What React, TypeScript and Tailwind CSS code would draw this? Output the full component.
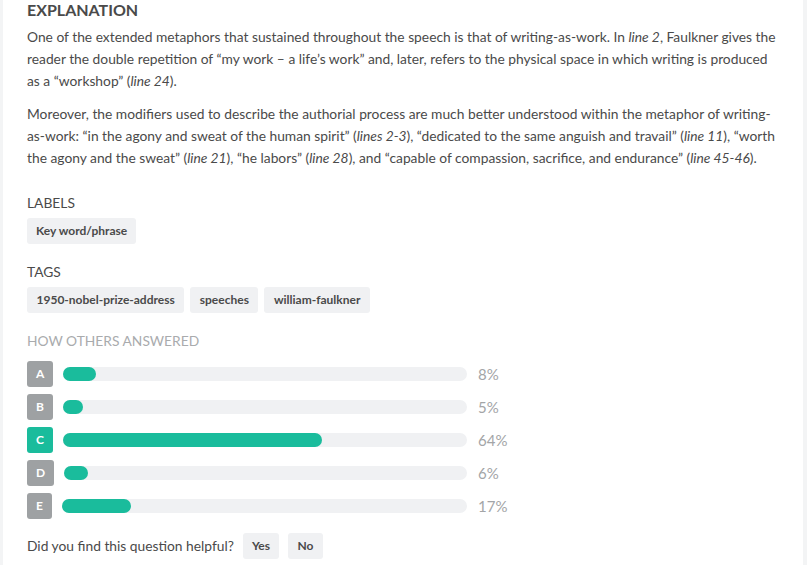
import React from "react";

const rows = [
  { l: "A", p: 8, c: false },
  { l: "B", p: 5, c: false },
  { l: "C", p: 64, c: true },
  { l: "D", p: 6, c: false },
  { l: "E", p: 17, c: false },
];

export default function App() {
  return (
    <div className="w-[807px] h-[565px] bg-[#f3f4f5] overflow-hidden" style={{ fontFamily: "Lato, 'Noto Sans', sans-serif" }}>
      <div className="ml-[3px] w-[800px] h-[565px] bg-white pl-[24px] pr-[23px] text-[#4a4a4a]">
        <h2 className="text-[16px] font-bold leading-[20px] text-[#4a4a4a]">EXPLANATION</h2>
        <div className="text-[13.8px] leading-[22px] mt-[6px]">
          <p>
            One of the extended metaphors that sustained throughout the speech is that of writing-as-work. In <i>line 2</i>, Faulkner gives the reader the double repetition of “my work – a life’s work” and, later, refers to the physical space in which writing is produced as a “workshop” (<i>line 24</i>).
          </p>
          <p className="mt-[11px]">
            Moreover, the modifiers used to describe the authorial process are much better understood within the metaphor of writing-as-work: “in the agony and sweat of the human spirit” (<i>lines 2-3</i>), “dedicated to the same anguish and travail” (<i>line 11</i>), “worth the agony and the sweat” (<i>line 21</i>), “he labors” (<i>line 28</i>), and “capable of compassion, sacrifice, and endurance” (<i>line 45-46</i>).
          </p>
        </div>

        <div className="mt-[25px] text-[13.8px] leading-[18px]">LABELS</div>
        <div className="mt-[6px] flex gap-[6px]">
          <span className="bg-[#f0f1f3] rounded-[3px] px-[9px] h-[26px] flex items-center text-[12px] font-bold">Key word/phrase</span>
        </div>

        <div className="mt-[19px] text-[13.8px] leading-[18px]">TAGS</div>
        <div className="mt-[6px] flex gap-[6px]">
          {["1950-nobel-prize-address", "speeches", "william-faulkner"].map((t) => (
            <span key={t} className="bg-[#f0f1f3] rounded-[3px] px-[9.5px] h-[26px] flex items-center text-[12px] font-bold">{t}</span>
          ))}
        </div>

        <div className="mt-[19px] text-[13.8px] leading-[18px] text-[#a9abad]">HOW OTHERS ANSWERED</div>
        <div className="mt-[11px] flex flex-col gap-[7px] w-[753px]">
          {rows.map((r) => (
            <div key={r.l} className="flex items-center h-[26px]">
              <span className={`h-[26px] min-w-[24px] px-[9px] rounded-[3px] flex items-center justify-center text-[12px] font-bold text-white ${r.c ? "bg-[#1abc9c]" : "bg-[#9ea1a3]"}`}>{r.l}</span>
              <div className="flex-1 ml-[10px] h-[14px] rounded-full bg-[#f0f1f3]">
                <div className="h-[14px] rounded-full bg-[#1abc9c]" style={{ width: `${r.p}%` }} />
              </div>
              <span className="w-[313px] pl-[11px] text-[15px] text-[#a3a5a7]">{r.p}%</span>
            </div>
          ))}
        </div>

        <div className="mt-[14px] flex items-center text-[13.8px]">
          <span>Did you find this question helpful?</span>
          <span className="ml-[9px] bg-[#f0f1f3] rounded-[3px] px-[9px] h-[26px] flex items-center text-[12px] font-bold">Yes</span>
          <span className="ml-[9px] bg-[#f0f1f3] rounded-[3px] px-[9.5px] h-[26px] flex items-center text-[12px] font-bold">No</span>
        </div>
      </div>
    </div>
  );
}
